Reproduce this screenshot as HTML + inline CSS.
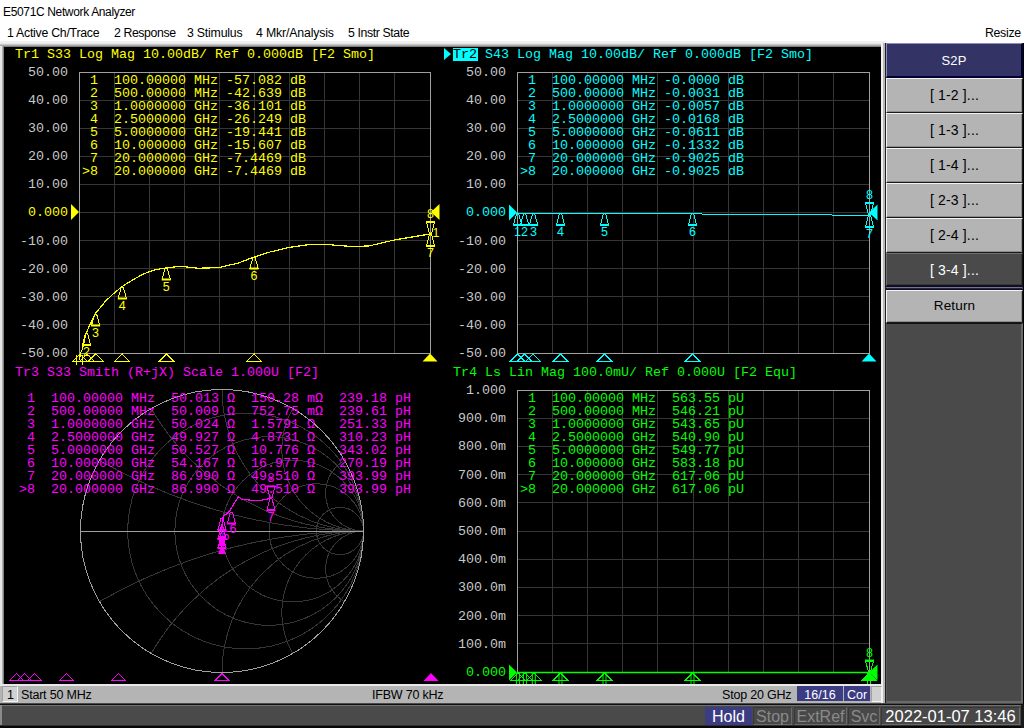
<!DOCTYPE html>
<html><head><meta charset="utf-8">
<style>
html,body{margin:0;padding:0;width:1024px;height:728px;overflow:hidden;background:#fff;}
.a{position:absolute;box-sizing:border-box;}
.t{position:absolute;font-family:'Liberation Sans', sans-serif;white-space:pre;line-height:1;}
.btn{position:absolute;left:886px;width:137px;background:#b4b4b4;border-top:1px solid #f4f4f4;border-left:1px solid #f4f4f4;border-right:1px solid #181818;border-bottom:1px solid #181818;box-shadow:inset -1px -1px 0 #8c8c8c;box-sizing:border-box;font-family:'Liberation Sans', sans-serif;font-size:14px;letter-spacing:0.15px;color:#000;text-align:center;}
.mb{position:absolute;top:707px;height:18px;box-sizing:border-box;background:#484848;border-top:1px solid #383838;border-left:1px solid #383838;border-right:1px solid #6a6a6a;border-bottom:1px solid #6a6a6a;font-family:'Liberation Sans', sans-serif;font-size:16px;color:#8a8a8a;text-align:center;line-height:17px;}
</style></head><body>
<div class="t" style="left:3px;top:6px;font-size:12px;letter-spacing:-0.35px;color:#000;">E5071C Network Analyzer</div>
<div class="t" style="left:7px;top:27px;font-size:12.3px;letter-spacing:-0.25px;color:#000;">1 Active Ch/Trace</div>
<div class="t" style="left:114px;top:27px;font-size:12.3px;letter-spacing:-0.4px;color:#000;">2 Response</div>
<div class="t" style="left:187px;top:27px;font-size:12.3px;letter-spacing:-0.2px;color:#000;">3 Stimulus</div>
<div class="t" style="left:256px;top:27px;font-size:12.3px;letter-spacing:-0.15px;color:#000;">4 Mkr/Analysis</div>
<div class="t" style="left:348px;top:27px;font-size:12.3px;letter-spacing:-0.4px;color:#000;">5 Instr State</div>
<div class="t" style="left:985px;top:27px;font-size:12.3px;letter-spacing:-0.3px;color:#000;">Resize</div>
<!-- frame -->
<div class="a" style="left:0;top:41px;width:886px;height:664px;background:#e6e6e6;"></div>
<div class="a" style="left:0;top:41px;width:886px;height:2px;background:#f0f0f0;"></div>
<div class="a" style="left:0;top:44px;width:886px;height:1px;background:#c8c8c8;"></div>
<div class="a" style="left:0;top:45px;width:886px;height:1px;background:#a8a8a8;"></div>
<div class="a" style="left:2px;top:46px;width:879px;height:1px;background:#808080;"></div>
<div class="a" style="left:2px;top:46px;width:1px;height:638px;background:#b0b0b0;"></div>
<div class="a" style="left:3px;top:46px;width:1px;height:638px;background:#808080;"></div>
<div class="a" style="left:4px;top:47px;width:877px;height:637px;background:#000;"></div>
<div class="a" style="left:881px;top:43px;width:2px;height:662px;background:#f0f0f0;"></div>
<div class="a" style="left:883px;top:43px;width:2px;height:662px;background:#b8b8b8;"></div>
<div class="a" style="left:885px;top:43px;width:1px;height:662px;background:#202020;"></div>
<svg class="a" style="left:0;top:0" width="1024" height="728" viewBox="0 0 1024 728">
<line x1="114.5" y1="72" x2="114.5" y2="353" stroke="#363636" stroke-width="1"/>
<line x1="149.5" y1="72" x2="149.5" y2="353" stroke="#363636" stroke-width="1"/>
<line x1="184.5" y1="72" x2="184.5" y2="353" stroke="#363636" stroke-width="1"/>
<line x1="219.5" y1="72" x2="219.5" y2="353" stroke="#363636" stroke-width="1"/>
<line x1="254.5" y1="72" x2="254.5" y2="353" stroke="#363636" stroke-width="1"/>
<line x1="289.5" y1="72" x2="289.5" y2="353" stroke="#363636" stroke-width="1"/>
<line x1="324.5" y1="72" x2="324.5" y2="353" stroke="#363636" stroke-width="1"/>
<line x1="359.5" y1="72" x2="359.5" y2="353" stroke="#363636" stroke-width="1"/>
<line x1="394.5" y1="72" x2="394.5" y2="353" stroke="#363636" stroke-width="1"/>
<line x1="79" y1="100.5" x2="430" y2="100.5" stroke="#363636" stroke-width="1"/>
<line x1="79" y1="128.5" x2="430" y2="128.5" stroke="#363636" stroke-width="1"/>
<line x1="79" y1="156.5" x2="430" y2="156.5" stroke="#363636" stroke-width="1"/>
<line x1="79" y1="184.5" x2="430" y2="184.5" stroke="#363636" stroke-width="1"/>
<line x1="79" y1="212.5" x2="430" y2="212.5" stroke="#363636" stroke-width="1"/>
<line x1="79" y1="240.5" x2="430" y2="240.5" stroke="#363636" stroke-width="1"/>
<line x1="79" y1="268.5" x2="430" y2="268.5" stroke="#363636" stroke-width="1"/>
<line x1="79" y1="296.5" x2="430" y2="296.5" stroke="#363636" stroke-width="1"/>
<line x1="79" y1="324.5" x2="430" y2="324.5" stroke="#363636" stroke-width="1"/>
<rect x="79.5" y="72.5" width="351" height="281" fill="none" stroke="#a0a0a0" stroke-width="1"/>
<line x1="552.5" y1="72" x2="552.5" y2="353" stroke="#363636" stroke-width="1"/>
<line x1="587.5" y1="72" x2="587.5" y2="353" stroke="#363636" stroke-width="1"/>
<line x1="622.5" y1="72" x2="622.5" y2="353" stroke="#363636" stroke-width="1"/>
<line x1="657.5" y1="72" x2="657.5" y2="353" stroke="#363636" stroke-width="1"/>
<line x1="693.5" y1="72" x2="693.5" y2="353" stroke="#363636" stroke-width="1"/>
<line x1="728.5" y1="72" x2="728.5" y2="353" stroke="#363636" stroke-width="1"/>
<line x1="763.5" y1="72" x2="763.5" y2="353" stroke="#363636" stroke-width="1"/>
<line x1="798.5" y1="72" x2="798.5" y2="353" stroke="#363636" stroke-width="1"/>
<line x1="833.5" y1="72" x2="833.5" y2="353" stroke="#363636" stroke-width="1"/>
<line x1="517" y1="100.5" x2="869" y2="100.5" stroke="#363636" stroke-width="1"/>
<line x1="517" y1="128.5" x2="869" y2="128.5" stroke="#363636" stroke-width="1"/>
<line x1="517" y1="156.5" x2="869" y2="156.5" stroke="#363636" stroke-width="1"/>
<line x1="517" y1="184.5" x2="869" y2="184.5" stroke="#363636" stroke-width="1"/>
<line x1="517" y1="212.5" x2="869" y2="212.5" stroke="#363636" stroke-width="1"/>
<line x1="517" y1="240.5" x2="869" y2="240.5" stroke="#363636" stroke-width="1"/>
<line x1="517" y1="268.5" x2="869" y2="268.5" stroke="#363636" stroke-width="1"/>
<line x1="517" y1="296.5" x2="869" y2="296.5" stroke="#363636" stroke-width="1"/>
<line x1="517" y1="324.5" x2="869" y2="324.5" stroke="#363636" stroke-width="1"/>
<rect x="517.5" y="72.5" width="352" height="281" fill="none" stroke="#a0a0a0" stroke-width="1"/>
<line x1="552.5" y1="390" x2="552.5" y2="672" stroke="#363636" stroke-width="1"/>
<line x1="587.5" y1="390" x2="587.5" y2="672" stroke="#363636" stroke-width="1"/>
<line x1="622.5" y1="390" x2="622.5" y2="672" stroke="#363636" stroke-width="1"/>
<line x1="657.5" y1="390" x2="657.5" y2="672" stroke="#363636" stroke-width="1"/>
<line x1="693.5" y1="390" x2="693.5" y2="672" stroke="#363636" stroke-width="1"/>
<line x1="728.5" y1="390" x2="728.5" y2="672" stroke="#363636" stroke-width="1"/>
<line x1="763.5" y1="390" x2="763.5" y2="672" stroke="#363636" stroke-width="1"/>
<line x1="798.5" y1="390" x2="798.5" y2="672" stroke="#363636" stroke-width="1"/>
<line x1="833.5" y1="390" x2="833.5" y2="672" stroke="#363636" stroke-width="1"/>
<line x1="517" y1="418.5" x2="869" y2="418.5" stroke="#363636" stroke-width="1"/>
<line x1="517" y1="446.5" x2="869" y2="446.5" stroke="#363636" stroke-width="1"/>
<line x1="517" y1="474.5" x2="869" y2="474.5" stroke="#363636" stroke-width="1"/>
<line x1="517" y1="502.5" x2="869" y2="502.5" stroke="#363636" stroke-width="1"/>
<line x1="517" y1="531.5" x2="869" y2="531.5" stroke="#363636" stroke-width="1"/>
<line x1="517" y1="559.5" x2="869" y2="559.5" stroke="#363636" stroke-width="1"/>
<line x1="517" y1="587.5" x2="869" y2="587.5" stroke="#363636" stroke-width="1"/>
<line x1="517" y1="615.5" x2="869" y2="615.5" stroke="#363636" stroke-width="1"/>
<line x1="517" y1="643.5" x2="869" y2="643.5" stroke="#363636" stroke-width="1"/>
<rect x="517.5" y="390.5" width="352" height="282" fill="none" stroke="#a0a0a0" stroke-width="1"/>
<text x="68" y="75.7" fill="#c8c8c8" font-family="'Liberation Mono', monospace" font-size="13.333" text-anchor="end" xml:space="preserve" >50.00</text>
<text x="68" y="103.7" fill="#c8c8c8" font-family="'Liberation Mono', monospace" font-size="13.333" text-anchor="end" xml:space="preserve" >40.00</text>
<text x="68" y="131.7" fill="#c8c8c8" font-family="'Liberation Mono', monospace" font-size="13.333" text-anchor="end" xml:space="preserve" >30.00</text>
<text x="68" y="159.7" fill="#c8c8c8" font-family="'Liberation Mono', monospace" font-size="13.333" text-anchor="end" xml:space="preserve" >20.00</text>
<text x="68" y="187.7" fill="#c8c8c8" font-family="'Liberation Mono', monospace" font-size="13.333" text-anchor="end" xml:space="preserve" >10.00</text>
<text x="68" y="215.7" fill="#ffff00" font-family="'Liberation Mono', monospace" font-size="13.333" text-anchor="end" xml:space="preserve" >0.000</text>
<text x="68" y="244.7" fill="#c8c8c8" font-family="'Liberation Mono', monospace" font-size="13.333" text-anchor="end" xml:space="preserve" >-10.00</text>
<text x="68" y="272.7" fill="#c8c8c8" font-family="'Liberation Mono', monospace" font-size="13.333" text-anchor="end" xml:space="preserve" >-20.00</text>
<text x="68" y="300.7" fill="#c8c8c8" font-family="'Liberation Mono', monospace" font-size="13.333" text-anchor="end" xml:space="preserve" >-30.00</text>
<text x="68" y="328.7" fill="#c8c8c8" font-family="'Liberation Mono', monospace" font-size="13.333" text-anchor="end" xml:space="preserve" >-40.00</text>
<text x="68" y="356.7" fill="#c8c8c8" font-family="'Liberation Mono', monospace" font-size="13.333" text-anchor="end" xml:space="preserve" >-50.00</text>
<text x="506" y="75.7" fill="#c8c8c8" font-family="'Liberation Mono', monospace" font-size="13.333" text-anchor="end" xml:space="preserve" >50.00</text>
<text x="506" y="103.7" fill="#c8c8c8" font-family="'Liberation Mono', monospace" font-size="13.333" text-anchor="end" xml:space="preserve" >40.00</text>
<text x="506" y="131.7" fill="#c8c8c8" font-family="'Liberation Mono', monospace" font-size="13.333" text-anchor="end" xml:space="preserve" >30.00</text>
<text x="506" y="159.7" fill="#c8c8c8" font-family="'Liberation Mono', monospace" font-size="13.333" text-anchor="end" xml:space="preserve" >20.00</text>
<text x="506" y="187.7" fill="#c8c8c8" font-family="'Liberation Mono', monospace" font-size="13.333" text-anchor="end" xml:space="preserve" >10.00</text>
<text x="506" y="215.7" fill="#00ffff" font-family="'Liberation Mono', monospace" font-size="13.333" text-anchor="end" xml:space="preserve" >0.000</text>
<text x="506" y="244.7" fill="#c8c8c8" font-family="'Liberation Mono', monospace" font-size="13.333" text-anchor="end" xml:space="preserve" >-10.00</text>
<text x="506" y="272.7" fill="#c8c8c8" font-family="'Liberation Mono', monospace" font-size="13.333" text-anchor="end" xml:space="preserve" >-20.00</text>
<text x="506" y="300.7" fill="#c8c8c8" font-family="'Liberation Mono', monospace" font-size="13.333" text-anchor="end" xml:space="preserve" >-30.00</text>
<text x="506" y="328.7" fill="#c8c8c8" font-family="'Liberation Mono', monospace" font-size="13.333" text-anchor="end" xml:space="preserve" >-40.00</text>
<text x="506" y="356.7" fill="#c8c8c8" font-family="'Liberation Mono', monospace" font-size="13.333" text-anchor="end" xml:space="preserve" >-50.00</text>
<text x="506" y="393.7" fill="#c8c8c8" font-family="'Liberation Mono', monospace" font-size="13.333" text-anchor="end" xml:space="preserve" >1.000</text>
<text x="506" y="421.7" fill="#c8c8c8" font-family="'Liberation Mono', monospace" font-size="13.333" text-anchor="end" xml:space="preserve" >900.0m</text>
<text x="506" y="449.7" fill="#c8c8c8" font-family="'Liberation Mono', monospace" font-size="13.333" text-anchor="end" xml:space="preserve" >800.0m</text>
<text x="506" y="478.7" fill="#c8c8c8" font-family="'Liberation Mono', monospace" font-size="13.333" text-anchor="end" xml:space="preserve" >700.0m</text>
<text x="506" y="506.7" fill="#c8c8c8" font-family="'Liberation Mono', monospace" font-size="13.333" text-anchor="end" xml:space="preserve" >600.0m</text>
<text x="506" y="534.7" fill="#c8c8c8" font-family="'Liberation Mono', monospace" font-size="13.333" text-anchor="end" xml:space="preserve" >500.0m</text>
<text x="506" y="562.7" fill="#c8c8c8" font-family="'Liberation Mono', monospace" font-size="13.333" text-anchor="end" xml:space="preserve" >400.0m</text>
<text x="506" y="590.7" fill="#c8c8c8" font-family="'Liberation Mono', monospace" font-size="13.333" text-anchor="end" xml:space="preserve" >300.0m</text>
<text x="506" y="619.7" fill="#c8c8c8" font-family="'Liberation Mono', monospace" font-size="13.333" text-anchor="end" xml:space="preserve" >200.0m</text>
<text x="506" y="647.7" fill="#c8c8c8" font-family="'Liberation Mono', monospace" font-size="13.333" text-anchor="end" xml:space="preserve" >100.0m</text>
<text x="506" y="675.7" fill="#00ff00" font-family="'Liberation Mono', monospace" font-size="13.333" text-anchor="end" xml:space="preserve" >0.000</text>
<text x="15" y="58" fill="#ffff00" font-family="'Liberation Mono', monospace" font-size="13.333" text-anchor="start" xml:space="preserve" >Tr1 S33 Log Mag 10.00dB/ Ref 0.000dB [F2 Smo]</text>
<path d="M444,48 L451,54 L444,60 Z" fill="#00ffff"/>
<rect x="453" y="48" width="25" height="13" fill="#00ffff"/>
<text x="453" y="58" fill="#000000" font-family="'Liberation Mono', monospace" font-size="13.333" text-anchor="start" xml:space="preserve" >Tr2</text>
<text x="485" y="58" fill="#00ffff" font-family="'Liberation Mono', monospace" font-size="13.333" text-anchor="start" xml:space="preserve" >S43 Log Mag 10.00dB/ Ref 0.000dB [F2 Smo]</text>
<text x="15" y="376" fill="#ff00ff" font-family="'Liberation Mono', monospace" font-size="13.333" text-anchor="start" xml:space="preserve" >Tr3 S33 Smith (R+jX) Scale 1.000U [F2]</text>
<text x="453" y="376" fill="#00ff00" font-family="'Liberation Mono', monospace" font-size="13.333" text-anchor="start" xml:space="preserve" >Tr4 Ls Lin Mag 100.0mU/ Ref 0.000U [F2 Equ]</text>
<circle cx="245.58333333333334" cy="531.0" r="117.91666666666667" fill="none" stroke="#363636" stroke-width="1" shape-rendering="crispEdges"/>
<circle cx="269.1666666666667" cy="531.0" r="94.33333333333333" fill="none" stroke="#363636" stroke-width="1" shape-rendering="crispEdges"/>
<circle cx="292.75" cy="531.0" r="70.75" fill="none" stroke="#363636" stroke-width="1" shape-rendering="crispEdges"/>
<circle cx="316.3333333333333" cy="531.0" r="47.166666666666664" fill="none" stroke="#363636" stroke-width="1" shape-rendering="crispEdges"/>
<circle cx="339.9166666666667" cy="531.0" r="23.583333333333332" fill="none" stroke="#363636" stroke-width="1" shape-rendering="crispEdges"/>
<clipPath id="uc"><circle cx="222" cy="531" r="141.5"/></clipPath>
<g clip-path="url(#uc)">
<circle cx="363.5" cy="2.9148107290037615" r="528.0851892709961" fill="none" stroke="#363636" stroke-width="1" shape-rendering="crispEdges"/>
<circle cx="363.5" cy="1059.0851892709961" r="528.0851892709961" fill="none" stroke="#363636" stroke-width="1" shape-rendering="crispEdges"/>
<circle cx="363.5" cy="285.9148107290039" r="245.08518927099615" fill="none" stroke="#363636" stroke-width="1" shape-rendering="crispEdges"/>
<circle cx="363.5" cy="776.0851892709961" r="245.08518927099615" fill="none" stroke="#363636" stroke-width="1" shape-rendering="crispEdges"/>
<circle cx="363.5" cy="389.5" r="141.50000000000003" fill="none" stroke="#363636" stroke-width="1" shape-rendering="crispEdges"/>
<circle cx="363.5" cy="672.5" r="141.50000000000003" fill="none" stroke="#363636" stroke-width="1" shape-rendering="crispEdges"/>
<circle cx="363.5" cy="449.30493690966796" r="81.69506309033207" fill="none" stroke="#363636" stroke-width="1" shape-rendering="crispEdges"/>
<circle cx="363.5" cy="612.695063090332" r="81.69506309033207" fill="none" stroke="#363636" stroke-width="1" shape-rendering="crispEdges"/>
<circle cx="363.5" cy="493.0851892709961" r="37.91481072900386" fill="none" stroke="#363636" stroke-width="1" shape-rendering="crispEdges"/>
<circle cx="363.5" cy="568.9148107290039" r="37.91481072900386" fill="none" stroke="#363636" stroke-width="1" shape-rendering="crispEdges"/>
</g>
<line x1="80.5" y1="531.5" x2="363.5" y2="531.5" stroke="#a0a0a0" stroke-width="1"/>
<circle cx="222" cy="531" r="141.5" fill="none" stroke="#a0a0a0" stroke-width="1" shape-rendering="crispEdges"/>
<text x="82" y="84" fill="#ffff00" font-family="'Liberation Mono', monospace" font-size="13.333" text-anchor="start" xml:space="preserve" > 1  100.00000 MHz -57.082 dB</text>
<text x="82" y="97" fill="#ffff00" font-family="'Liberation Mono', monospace" font-size="13.333" text-anchor="start" xml:space="preserve" > 2  500.00000 MHz -42.639 dB</text>
<text x="82" y="110" fill="#ffff00" font-family="'Liberation Mono', monospace" font-size="13.333" text-anchor="start" xml:space="preserve" > 3  1.0000000 GHz -36.101 dB</text>
<text x="82" y="123" fill="#ffff00" font-family="'Liberation Mono', monospace" font-size="13.333" text-anchor="start" xml:space="preserve" > 4  2.5000000 GHz -26.249 dB</text>
<text x="82" y="136" fill="#ffff00" font-family="'Liberation Mono', monospace" font-size="13.333" text-anchor="start" xml:space="preserve" > 5  5.0000000 GHz -19.441 dB</text>
<text x="82" y="149" fill="#ffff00" font-family="'Liberation Mono', monospace" font-size="13.333" text-anchor="start" xml:space="preserve" > 6  10.000000 GHz -15.607 dB</text>
<text x="82" y="162" fill="#ffff00" font-family="'Liberation Mono', monospace" font-size="13.333" text-anchor="start" xml:space="preserve" > 7  20.000000 GHz -7.4469 dB</text>
<text x="82" y="175" fill="#ffff00" font-family="'Liberation Mono', monospace" font-size="13.333" text-anchor="start" xml:space="preserve" >&gt;8  20.000000 GHz -7.4469 dB</text>
<text x="520" y="84" fill="#00ffff" font-family="'Liberation Mono', monospace" font-size="13.333" text-anchor="start" xml:space="preserve" > 1  100.00000 MHz -0.0000 dB</text>
<text x="520" y="97" fill="#00ffff" font-family="'Liberation Mono', monospace" font-size="13.333" text-anchor="start" xml:space="preserve" > 2  500.00000 MHz -0.0031 dB</text>
<text x="520" y="110" fill="#00ffff" font-family="'Liberation Mono', monospace" font-size="13.333" text-anchor="start" xml:space="preserve" > 3  1.0000000 GHz -0.0057 dB</text>
<text x="520" y="123" fill="#00ffff" font-family="'Liberation Mono', monospace" font-size="13.333" text-anchor="start" xml:space="preserve" > 4  2.5000000 GHz -0.0168 dB</text>
<text x="520" y="136" fill="#00ffff" font-family="'Liberation Mono', monospace" font-size="13.333" text-anchor="start" xml:space="preserve" > 5  5.0000000 GHz -0.0611 dB</text>
<text x="520" y="149" fill="#00ffff" font-family="'Liberation Mono', monospace" font-size="13.333" text-anchor="start" xml:space="preserve" > 6  10.000000 GHz -0.1332 dB</text>
<text x="520" y="162" fill="#00ffff" font-family="'Liberation Mono', monospace" font-size="13.333" text-anchor="start" xml:space="preserve" > 7  20.000000 GHz -0.9025 dB</text>
<text x="520" y="175" fill="#00ffff" font-family="'Liberation Mono', monospace" font-size="13.333" text-anchor="start" xml:space="preserve" >&gt;8  20.000000 GHz -0.9025 dB</text>
<text x="19" y="402" fill="#ff00ff" font-family="'Liberation Mono', monospace" font-size="13.333" text-anchor="start" xml:space="preserve" > 1  100.00000 MHz  50.013 Ω  150.28 mΩ  239.18 pH</text>
<text x="19" y="415" fill="#ff00ff" font-family="'Liberation Mono', monospace" font-size="13.333" text-anchor="start" xml:space="preserve" > 2  500.00000 MHz  50.009 Ω  752.75 mΩ  239.61 pH</text>
<text x="19" y="428" fill="#ff00ff" font-family="'Liberation Mono', monospace" font-size="13.333" text-anchor="start" xml:space="preserve" > 3  1.0000000 GHz  50.024 Ω  1.5791 Ω   251.33 pH</text>
<text x="19" y="441" fill="#ff00ff" font-family="'Liberation Mono', monospace" font-size="13.333" text-anchor="start" xml:space="preserve" > 4  2.5000000 GHz  49.927 Ω  4.8731 Ω   310.23 pH</text>
<text x="19" y="454" fill="#ff00ff" font-family="'Liberation Mono', monospace" font-size="13.333" text-anchor="start" xml:space="preserve" > 5  5.0000000 GHz  50.527 Ω  10.776 Ω   343.02 pH</text>
<text x="19" y="467" fill="#ff00ff" font-family="'Liberation Mono', monospace" font-size="13.333" text-anchor="start" xml:space="preserve" > 6  10.000000 GHz  54.167 Ω  16.977 Ω   270.19 pH</text>
<text x="19" y="480" fill="#ff00ff" font-family="'Liberation Mono', monospace" font-size="13.333" text-anchor="start" xml:space="preserve" > 7  20.000000 GHz  86.990 Ω  49.510 Ω   393.99 pH</text>
<text x="19" y="493" fill="#ff00ff" font-family="'Liberation Mono', monospace" font-size="13.333" text-anchor="start" xml:space="preserve" >&gt;8  20.000000 GHz  86.990 Ω  49.510 Ω   393.99 pH</text>
<text x="520" y="402" fill="#00ff00" font-family="'Liberation Mono', monospace" font-size="13.333" text-anchor="start" xml:space="preserve" > 1  100.00000 MHz  563.55 pU</text>
<text x="520" y="415" fill="#00ff00" font-family="'Liberation Mono', monospace" font-size="13.333" text-anchor="start" xml:space="preserve" > 2  500.00000 MHz  546.21 pU</text>
<text x="520" y="428" fill="#00ff00" font-family="'Liberation Mono', monospace" font-size="13.333" text-anchor="start" xml:space="preserve" > 3  1.0000000 GHz  543.65 pU</text>
<text x="520" y="441" fill="#00ff00" font-family="'Liberation Mono', monospace" font-size="13.333" text-anchor="start" xml:space="preserve" > 4  2.5000000 GHz  540.90 pU</text>
<text x="520" y="454" fill="#00ff00" font-family="'Liberation Mono', monospace" font-size="13.333" text-anchor="start" xml:space="preserve" > 5  5.0000000 GHz  549.77 pU</text>
<text x="520" y="467" fill="#00ff00" font-family="'Liberation Mono', monospace" font-size="13.333" text-anchor="start" xml:space="preserve" > 6  10.000000 GHz  583.18 pU</text>
<text x="520" y="480" fill="#00ff00" font-family="'Liberation Mono', monospace" font-size="13.333" text-anchor="start" xml:space="preserve" > 7  20.000000 GHz  617.06 pU</text>
<text x="520" y="493" fill="#00ff00" font-family="'Liberation Mono', monospace" font-size="13.333" text-anchor="start" xml:space="preserve" >&gt;8  20.000000 GHz  617.06 pU</text>
<path d="M71,204 L79,212 L71,220 Z" fill="#ffff00"/>
<path d="M439.5,204 L431,212 L439.5,220 Z" fill="#ffff00"/>
<clipPath id="c1"><rect x="4" y="47" width="877" height="318"/></clipPath>
<g clip-path="url(#c1)">
<polyline points="79.5,360.0 80.3,353.5 82.4,349.4 83.7,343.9 85.7,334.1 87.9,329.4 90.1,324.2 95.6,313.2 105.5,301.2 114.3,292.9 122.5,286.3 133.0,279.7 144.0,273.7 155.0,269.8 165.9,268.0 178.0,266.5 183.0,266.6 197.6,268.2 218.6,267.7 238.4,263.0 253.6,257.2 270.0,252.0 289.9,247.3 309.4,244.5 327.0,244.5 350.2,246.4 368.8,246.0 394.7,239.9 430.0,234.0" fill="none" stroke="#ffff00" stroke-width="1.2" stroke-linejoin="round" shape-rendering="crispEdges"/>
<path d="M82.5,344.5 L85.5,333.5 L87.5,333.5 L90.5,344.5 Z" fill="none" stroke="#ffff00" stroke-width="1" shape-rendering="crispEdges"/>
<rect x="82.0" y="344" width="9" height="2" fill="#ffff00"/>
<text x="86.5" y="356" fill="#ffff00" font-family="'Liberation Sans', sans-serif" font-size="12.5" text-anchor="middle" xml:space="preserve" >2</text>
<path d="M91.6,325.0 L94.6,314.0 L96.6,314.0 L99.6,325.0 Z" fill="none" stroke="#ffff00" stroke-width="1" shape-rendering="crispEdges"/>
<rect x="91.1" y="324.5" width="9" height="2" fill="#ffff00"/>
<text x="95.6" y="336.5" fill="#ffff00" font-family="'Liberation Sans', sans-serif" font-size="12.5" text-anchor="middle" xml:space="preserve" >3</text>
<path d="M118.3,298.0 L121.3,287.0 L123.3,287.0 L126.3,298.0 Z" fill="none" stroke="#ffff00" stroke-width="1" shape-rendering="crispEdges"/>
<rect x="117.8" y="297.5" width="9" height="2" fill="#ffff00"/>
<text x="122.3" y="309.5" fill="#ffff00" font-family="'Liberation Sans', sans-serif" font-size="12.5" text-anchor="middle" xml:space="preserve" >4</text>
<path d="M162.2,279.0 L165.2,268.0 L167.2,268.0 L170.2,279.0 Z" fill="none" stroke="#ffff00" stroke-width="1" shape-rendering="crispEdges"/>
<rect x="161.7" y="278.5" width="9" height="2" fill="#ffff00"/>
<text x="166.2" y="290.5" fill="#ffff00" font-family="'Liberation Sans', sans-serif" font-size="12.5" text-anchor="middle" xml:space="preserve" >5</text>
<path d="M250,268.0 L253,257.0 L255,257.0 L258,268.0 Z" fill="none" stroke="#ffff00" stroke-width="1" shape-rendering="crispEdges"/>
<rect x="249.5" y="267.5" width="9" height="2" fill="#ffff00"/>
<text x="254" y="279.5" fill="#ffff00" font-family="'Liberation Sans', sans-serif" font-size="12.5" text-anchor="middle" xml:space="preserve" >6</text>
<path d="M426.5,245.5 L429.5,234.5 L431.5,234.5 L434.5,245.5 Z" fill="none" stroke="#ffff00" stroke-width="1" shape-rendering="crispEdges"/>
<rect x="426.0" y="245" width="9" height="2" fill="#ffff00"/>
<text x="430.5" y="257" fill="#ffff00" font-family="'Liberation Sans', sans-serif" font-size="12.5" text-anchor="middle" xml:space="preserve" >7</text>
<path d="M426.5,222.5 L429.5,233.5 L431.5,233.5 L434.5,222.5 Z" fill="none" stroke="#ffff00" stroke-width="1" shape-rendering="crispEdges"/>
<rect x="426.0" y="221" width="9" height="2" fill="#ffff00"/>
<text x="430.5" y="218" fill="#ffff00" font-family="'Liberation Sans', sans-serif" font-size="12.5" text-anchor="middle" xml:space="preserve" >8</text>
<text x="436" y="237" fill="#ffff00" font-family="'Liberation Sans', sans-serif" font-size="12.5" text-anchor="middle" xml:space="preserve" >1</text>
<path d="M72.9,361.0 L79.9,354.0 L86.9,361.0 Z" fill="none" stroke="#ffff00" stroke-width="1" shape-rendering="crispEdges"/>
<path d="M79.9,361.0 L86.9,354.0 L93.9,361.0 Z" fill="none" stroke="#ffff00" stroke-width="1" shape-rendering="crispEdges"/>
<path d="M88.7,361.0 L95.7,354.0 L102.7,361.0 Z" fill="none" stroke="#ffff00" stroke-width="1" shape-rendering="crispEdges"/>
<path d="M115.3,361.0 L122.3,354.0 L129.3,361.0 Z" fill="none" stroke="#ffff00" stroke-width="1" shape-rendering="crispEdges"/>
<path d="M159.5,361.0 L166.5,354.0 L173.5,361.0 Z" fill="none" stroke="#ffff00" stroke-width="1" shape-rendering="crispEdges"/>
<path d="M247.3,361.0 L254.3,354.0 L261.3,361.0 Z" fill="none" stroke="#ffff00" stroke-width="1" shape-rendering="crispEdges"/>
<path d="M422.5,361.5 L430,353.5 L437.5,361.5 Z" fill="#ffff00"/>
<path d="M76.5,355 V365 M82.5,355 V365" stroke="#ffff00" stroke-width="1"/>
</g>
<path d="M509,204.5 L517,212.5 L509,220.5 Z" fill="#00ffff"/>
<path d="M877.5,204.5 L869,212.5 L877.5,220.5 Z" fill="#00ffff"/>
<clipPath id="c2"><rect x="440" y="47" width="441" height="318"/></clipPath>
<g clip-path="url(#c2)">
<path d="M517,213.5 H702 M702,214.5 H832 M832,215.5 H869" stroke="#00ffff" stroke-width="1.2" fill="none"/>
<path d="M513.6,224.5 L516.6,213.5 L518.6,213.5 L521.6,224.5 Z" fill="none" stroke="#00ffff" stroke-width="1" shape-rendering="crispEdges"/>
<rect x="513.1" y="224" width="9" height="2" fill="#00ffff"/>
<text x="517.6" y="236" fill="#00ffff" font-family="'Liberation Sans', sans-serif" font-size="12.5" text-anchor="middle" xml:space="preserve" >1</text>
<path d="M520.6,224.5 L523.6,213.5 L525.6,213.5 L528.6,224.5 Z" fill="none" stroke="#00ffff" stroke-width="1" shape-rendering="crispEdges"/>
<rect x="520.1" y="224" width="9" height="2" fill="#00ffff"/>
<text x="524.6" y="236" fill="#00ffff" font-family="'Liberation Sans', sans-serif" font-size="12.5" text-anchor="middle" xml:space="preserve" >2</text>
<path d="M529.6,224.5 L532.6,213.5 L534.6,213.5 L537.6,224.5 Z" fill="none" stroke="#00ffff" stroke-width="1" shape-rendering="crispEdges"/>
<rect x="529.1" y="224" width="9" height="2" fill="#00ffff"/>
<text x="533.6" y="236" fill="#00ffff" font-family="'Liberation Sans', sans-serif" font-size="12.5" text-anchor="middle" xml:space="preserve" >3</text>
<path d="M556.5,224.5 L559.5,213.5 L561.5,213.5 L564.5,224.5 Z" fill="none" stroke="#00ffff" stroke-width="1" shape-rendering="crispEdges"/>
<rect x="556.0" y="224" width="9" height="2" fill="#00ffff"/>
<text x="560.5" y="236" fill="#00ffff" font-family="'Liberation Sans', sans-serif" font-size="12.5" text-anchor="middle" xml:space="preserve" >4</text>
<path d="M600.5,224.5 L603.5,213.5 L605.5,213.5 L608.5,224.5 Z" fill="none" stroke="#00ffff" stroke-width="1" shape-rendering="crispEdges"/>
<rect x="600.0" y="224" width="9" height="2" fill="#00ffff"/>
<text x="604.5" y="236" fill="#00ffff" font-family="'Liberation Sans', sans-serif" font-size="12.5" text-anchor="middle" xml:space="preserve" >5</text>
<path d="M688.5,224.5 L691.5,213.5 L693.5,213.5 L696.5,224.5 Z" fill="none" stroke="#00ffff" stroke-width="1" shape-rendering="crispEdges"/>
<rect x="688.0" y="224" width="9" height="2" fill="#00ffff"/>
<text x="692.5" y="236" fill="#00ffff" font-family="'Liberation Sans', sans-serif" font-size="12.5" text-anchor="middle" xml:space="preserve" >6</text>
<path d="M865.5,226.5 L868.5,215.5 L870.5,215.5 L873.5,226.5 Z" fill="none" stroke="#00ffff" stroke-width="1" shape-rendering="crispEdges"/>
<rect x="865.0" y="226" width="9" height="2" fill="#00ffff"/>
<text x="869.5" y="238" fill="#00ffff" font-family="'Liberation Sans', sans-serif" font-size="12.5" text-anchor="middle" xml:space="preserve" >7</text>
<path d="M865.5,203.5 L868.5,214.5 L870.5,214.5 L873.5,203.5 Z" fill="none" stroke="#00ffff" stroke-width="1" shape-rendering="crispEdges"/>
<rect x="865.0" y="202" width="9" height="2" fill="#00ffff"/>
<text x="869.5" y="199" fill="#00ffff" font-family="'Liberation Sans', sans-serif" font-size="12.5" text-anchor="middle" xml:space="preserve" >8</text>
<path d="M510.5,361.0 L517.5,354.0 L524.5,361.0 Z" fill="none" stroke="#00ffff" stroke-width="1" shape-rendering="crispEdges"/>
<path d="M517.5,361.0 L524.5,354.0 L531.5,361.0 Z" fill="none" stroke="#00ffff" stroke-width="1" shape-rendering="crispEdges"/>
<path d="M526.3,361.0 L533.3,354.0 L540.3,361.0 Z" fill="none" stroke="#00ffff" stroke-width="1" shape-rendering="crispEdges"/>
<path d="M553.5,361.0 L560.5,354.0 L567.5,361.0 Z" fill="none" stroke="#00ffff" stroke-width="1" shape-rendering="crispEdges"/>
<path d="M597.5,361.0 L604.5,354.0 L611.5,361.0 Z" fill="none" stroke="#00ffff" stroke-width="1" shape-rendering="crispEdges"/>
<path d="M685.5,361.0 L692.5,354.0 L699.5,361.0 Z" fill="none" stroke="#00ffff" stroke-width="1" shape-rendering="crispEdges"/>
<path d="M861.5,361.5 L869,353.5 L876.5,361.5 Z" fill="#00ffff"/>
</g>
<path d="M509,664.5 L517,672.5 L509,680.5 Z" fill="#00ff00"/>
<clipPath id="c4"><rect x="440" y="365" width="441" height="319"/></clipPath>
<g clip-path="url(#c4)">
<line x1="517" y1="672.5" x2="869" y2="672.5" stroke="#00ff00" stroke-width="1.3"/>
<path d="M510.9,680.0 L517.9,673.0 L524.9,680.0 Z" fill="none" stroke="#00ff00" stroke-width="1" shape-rendering="crispEdges"/>
<path d="M516.4,673 V684 M519.4,673 V684" stroke="#00ff00" stroke-width="1"/>
<path d="M517.9,680.0 L524.9,673.0 L531.9,680.0 Z" fill="none" stroke="#00ff00" stroke-width="1" shape-rendering="crispEdges"/>
<path d="M523.4,673 V684 M526.4,673 V684" stroke="#00ff00" stroke-width="1"/>
<path d="M526.8,680.0 L533.8,673.0 L540.8,680.0 Z" fill="none" stroke="#00ff00" stroke-width="1" shape-rendering="crispEdges"/>
<path d="M532.3,673 V684 M535.3,673 V684" stroke="#00ff00" stroke-width="1"/>
<path d="M553.5,680.0 L560.5,673.0 L567.5,680.0 Z" fill="none" stroke="#00ff00" stroke-width="1" shape-rendering="crispEdges"/>
<path d="M559.0,673 V684 M562.0,673 V684" stroke="#00ff00" stroke-width="1"/>
<path d="M597.5,680.0 L604.5,673.0 L611.5,680.0 Z" fill="none" stroke="#00ff00" stroke-width="1" shape-rendering="crispEdges"/>
<path d="M603.0,673 V684 M606.0,673 V684" stroke="#00ff00" stroke-width="1"/>
<path d="M685.5,680.0 L692.5,673.0 L699.5,680.0 Z" fill="none" stroke="#00ff00" stroke-width="1" shape-rendering="crispEdges"/>
<path d="M691.0,673 V684 M694.0,673 V684" stroke="#00ff00" stroke-width="1"/>
<path d="M862,680.0 L869,673.0 L876,680.0 Z" fill="none" stroke="#00ff00" stroke-width="1" shape-rendering="crispEdges"/>
<path d="M867.5,673 V684 M870.5,673 V684" stroke="#00ff00" stroke-width="1"/>
<path d="M865.5,661.0 L868.5,672.0 L870.5,672.0 L873.5,661.0 Z" fill="none" stroke="#00ff00" stroke-width="1" shape-rendering="crispEdges"/>
<rect x="865.0" y="659.5" width="9" height="2" fill="#00ff00"/>
<text x="869.5" y="656.5" fill="#00ff00" font-family="'Liberation Sans', sans-serif" font-size="12.5" text-anchor="middle" xml:space="preserve" >8</text>
<path d="M861.5,680.5 L869,672.5 L876.5,680.5 Z" fill="#00ff00"/>
<path d="M877.5,664.5 L869,672.5 L877.5,680.5 Z" fill="#00ff00"/>
</g>
<clipPath id="c3"><rect x="4" y="365" width="436" height="319"/></clipPath>
<g clip-path="url(#c3)">
<polyline points="222.5,553.0 221.0,545.0 220.5,536.0 221.5,531.0 222.0,526.0 222.6,518.0 224.0,515.5 227.0,513.5 229.5,511.0 238.5,496.5 241.3,499.2 257.7,500.9 271.0,498.3" fill="none" stroke="#ff00ff" stroke-width="1.2" stroke-linejoin="round" shape-rendering="crispEdges"/>
<path d="M218,529.5 L221,518.5 L223,518.5 L226,529.5 Z" fill="none" stroke="#ff00ff" stroke-width="1" shape-rendering="crispEdges"/>
<rect x="217.5" y="529" width="9" height="2" fill="#ff00ff"/>
<path d="M218,538.5 L221,527.5 L223,527.5 L226,538.5 Z" fill="none" stroke="#ff00ff" stroke-width="1" shape-rendering="crispEdges"/>
<rect x="217.5" y="538" width="9" height="2" fill="#ff00ff"/>
<path d="M218,547.5 L221,536.5 L223,536.5 L226,547.5 Z" fill="none" stroke="#ff00ff" stroke-width="1" shape-rendering="crispEdges"/>
<rect x="217.5" y="547" width="9" height="2" fill="#ff00ff"/>
<path d="M227.4,523.0 L230.4,512.0 L232.4,512.0 L235.4,523.0 Z" fill="none" stroke="#ff00ff" stroke-width="1" shape-rendering="crispEdges"/>
<rect x="226.9" y="522.5" width="9" height="2" fill="#ff00ff"/>
<text x="233" y="533" fill="#ff00ff" font-family="'Liberation Sans', sans-serif" font-size="12.5" text-anchor="middle" xml:space="preserve" >6</text>
<text x="226" y="540" fill="#ff00ff" font-family="'Liberation Sans', sans-serif" font-size="12.5" text-anchor="middle" xml:space="preserve" >5</text>
<path d="M267,509.8 L270,498.8 L272,498.8 L275,509.8 Z" fill="none" stroke="#ff00ff" stroke-width="1" shape-rendering="crispEdges"/>
<rect x="266.5" y="509.3" width="9" height="2" fill="#ff00ff"/>
<text x="271" y="521.3" fill="#ff00ff" font-family="'Liberation Sans', sans-serif" font-size="12.5" text-anchor="middle" xml:space="preserve" >7</text>
<path d="M267,486.8 L270,497.8 L272,497.8 L275,486.8 Z" fill="none" stroke="#ff00ff" stroke-width="1" shape-rendering="crispEdges"/>
<rect x="266.5" y="485.3" width="9" height="2" fill="#ff00ff"/>
<text x="271" y="482.3" fill="#ff00ff" font-family="'Liberation Sans', sans-serif" font-size="12.5" text-anchor="middle" xml:space="preserve" >8</text>
<path d="M219,536 h6 v10 h-6 z" fill="#ff00ff"/>
<path d="M218,554 L222,545 L226,554 z" fill="#ff00ff"/>
<path d="M9.399999999999999,680.5 L16.4,673.5 L23.4,680.5 Z" fill="none" stroke="#ff00ff" stroke-width="1" shape-rendering="crispEdges"/>
<path d="M17.3,680.5 L24.3,673.5 L31.3,680.5 Z" fill="none" stroke="#ff00ff" stroke-width="1" shape-rendering="crispEdges"/>
<path d="M27.5,680.5 L34.5,673.5 L41.5,680.5 Z" fill="none" stroke="#ff00ff" stroke-width="1" shape-rendering="crispEdges"/>
<path d="M59.599999999999994,680.5 L66.6,673.5 L73.6,680.5 Z" fill="none" stroke="#ff00ff" stroke-width="1" shape-rendering="crispEdges"/>
<path d="M111.4,680.5 L118.4,673.5 L125.4,680.5 Z" fill="none" stroke="#ff00ff" stroke-width="1" shape-rendering="crispEdges"/>
<path d="M215,680.5 L222,673.5 L229,680.5 Z" fill="none" stroke="#ff00ff" stroke-width="1" shape-rendering="crispEdges"/>
<path d="M423.5,681 L431,673 L438.5,681 Z" fill="#ff00ff"/>
</g>
</svg>
<!-- status bar -->
<div class="a" style="left:0;top:684px;width:881px;height:20px;background:#b4b4b4;border-top:2px solid #e8e8e8;border-bottom:1px solid #989898;"></div>
<div class="a" style="left:2px;top:686px;width:16px;height:16px;background:#d0d0d0;border-top:1px solid #a0a0a0;border-left:1px solid #a0a0a0;border-bottom:1px solid #f4f4f4;border-right:1px solid #f4f4f4;"></div>
<div class="t" style="left:7px;top:689px;font-size:12.5px;">1</div>
<div class="t" style="left:21px;top:689px;font-size:12.5px;letter-spacing:-0.2px;">Start 50 MHz</div>
<div class="t" style="left:372px;top:689px;font-size:12.5px;letter-spacing:-0.2px;">IFBW 70 kHz</div>
<div class="t" style="left:722px;top:689px;font-size:12.5px;letter-spacing:-0.2px;">Stop 20 GHz</div>
<div class="a" style="left:797px;top:686px;width:46px;height:15px;background:#3c3c82;"></div>
<div class="t" style="left:797px;top:689px;width:46px;font-size:12.5px;color:#fff;text-align:center;">16/16</div>
<div class="a" style="left:844px;top:686px;width:26px;height:15px;background:#3c3c82;"></div>
<div class="t" style="left:844px;top:689px;width:26px;font-size:12.5px;color:#fff;text-align:center;">Cor</div>
<div class="a" style="left:871px;top:686px;width:11px;height:16px;background:#d0d0d0;border-top:1px solid #a0a0a0;border-left:1px solid #a0a0a0;border-bottom:1px solid #f4f4f4;border-right:1px solid #f4f4f4;"></div>
<!-- bottom bar -->
<div class="a" style="left:0;top:703px;width:1024px;height:25px;background:#4a4a4a;"></div>
<div class="a" style="left:0;top:704px;width:1024px;height:1px;background:#101010;"></div>
<div class="a" style="left:0;top:705px;width:1024px;height:1px;background:#707070;"></div>
<div class="a" style="left:0;top:725px;width:1024px;height:1px;background:#303030;"></div><div class="a" style="left:0;top:726px;width:1024px;height:2px;background:#080808;"></div>
<div class="a" style="left:0;top:705px;width:2px;height:20px;background:#8a8a8a;"></div><div class="a" style="left:1021px;top:705px;width:3px;height:23px;background:#1a1a1a;"></div>
<div class="mb" style="left:705px;width:47px;background:#3c3c82;color:#fff;border-color:#3c3c82;">Hold</div>
<div class="mb" style="left:753px;width:39px;">Stop</div>
<div class="mb" style="left:794px;width:53px;">ExtRef</div>
<div class="mb" style="left:848px;width:32px;">Svc</div>
<div class="mb" style="left:881px;width:139px;color:#fff;font-size:16.5px;">2022-01-07 13:46</div>
<!-- softkeys -->
<div class="a" style="left:886px;top:43px;width:137px;height:661px;background:#4a4a4a;"></div>
<div class="a" style="left:1023px;top:43px;width:1px;height:661px;background:#000;"></div>
<div class="btn" style="top:43px;height:35px;line-height:33px;background:#333366;color:#fff;font-size:13px;border-top-color:#8c8cc0;border-left-color:#8c8cc0;border-right:2px solid #000033;border-bottom:2px solid #000033;box-shadow:none;">S2P</div>
<div class="btn" style="top:78px;height:35px;line-height:32px;">[ 1-2 ]...</div>
<div class="btn" style="top:113px;height:35px;line-height:32px;">[ 1-3 ]...</div>
<div class="btn" style="top:148px;height:35px;line-height:32px;">[ 1-4 ]...</div>
<div class="btn" style="top:183px;height:35px;line-height:32px;">[ 2-3 ]...</div>
<div class="btn" style="top:218px;height:35px;line-height:32px;">[ 2-4 ]...</div>
<div class="btn" style="top:253px;height:33px;line-height:32px;background:#4a4a4a;color:#fff;border-top-color:#707070;border-left-color:#707070;border-bottom-color:#101010;border-right-color:#101010;box-shadow:inset -1px -1px 0 #383838;">[ 3-4 ]...</div>
<div class="a" style="left:886px;top:286px;width:137px;height:1px;background:#101010;"></div>
<div class="a" style="left:886px;top:287px;width:136px;height:1px;background:#7070b0;"></div>
<div class="a" style="left:886px;top:288px;width:136px;height:1px;background:#202050;"></div>
<div class="a" style="left:886px;top:289px;width:137px;height:1px;background:#101010;"></div>
<div class="btn" style="top:290px;height:33px;line-height:30px;font-size:13.5px;">Return</div>
<div class="a" style="left:886px;top:323px;width:137px;height:380px;background:#4a4a4a;border-top:1px solid #101010;border-left:1px solid #5a5a5a;border-right:2px solid #6a6a6a;border-bottom:2px solid #6a6a6a;"></div>
</body></html>
